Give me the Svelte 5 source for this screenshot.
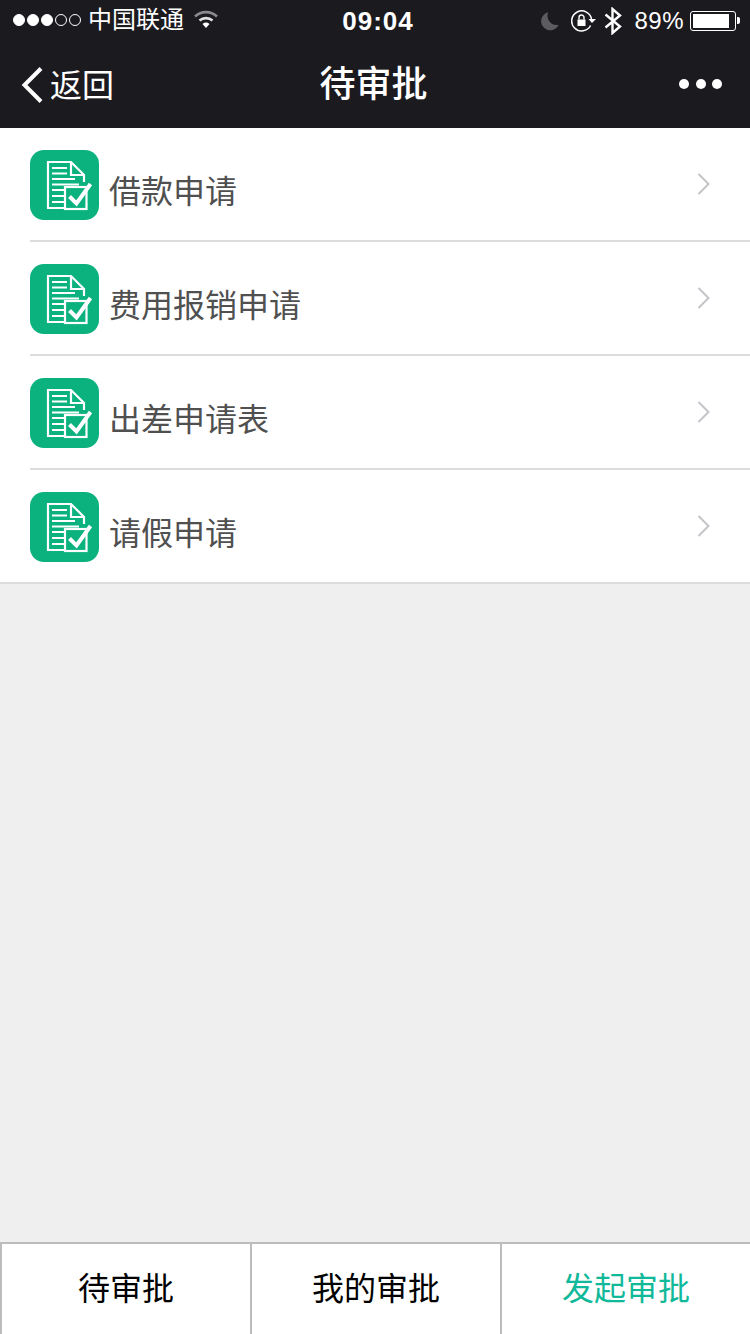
<script>
	const items = ["借款申请", "费用报销申请", "出差申请表", "请假申请"];
	const tabs = ["待审批", "我的审批", "发起审批"];
</script>

<div class="page">
	<header class="top">
		<div class="status">
			<div class="status-left">
				<span class="signal">
					<i class="on"></i><i class="on"></i><i class="on"></i><i></i><i></i>
				</span>
				<span class="carrier">中国联通</span>
				<svg class="wifi" width="26" height="20" viewBox="0 0 26 20">
					<path d="M2 6.5 A16 16 0 0 1 24 6.5" fill="none" stroke="#8a8a8c" stroke-width="2.6" />
					<path d="M6.5 10.5 A10 10 0 0 1 19.5 10.5" fill="none" stroke="#e0e0e0" stroke-width="2.6" />
					<path d="M9.5 14 A5.5 5.5 0 0 1 16.5 14 L13 18 Z" fill="#fff" />
				</svg>
			</div>
			<div class="clock">09:04</div>
			<div class="status-right">
				<svg class="moon" width="20" height="22" viewBox="0 0 22 22">
					<path d="M9 1.5 A10 10 0 1 0 20.5 15 A10 10 0 0 1 9 1.5 Z" fill="#5c5c60" />
				</svg>
				<svg class="lock" width="26" height="24" viewBox="0 0 26 22">
					<path d="M19.6 15.5 A10 10 0 1 1 20.6 9.5" fill="none" stroke="#fff" stroke-width="1.5" />
					<path d="M17.5 9 L25 9 L21 13 Z" fill="#fff" />
					<rect x="6.5" y="9.5" width="8" height="6.5" fill="#fff" />
					<path d="M8 9.5 V7.5 A2.5 2.5 0 0 1 13 7.5 V9.5" fill="none" stroke="#fff" stroke-width="1.4" />
				</svg>
				<svg class="bt" width="18" height="28" viewBox="0 0 18 28">
					<path d="M1.5 7.5 L16 19.5 L8.5 26 V2 L16 8.5 L1.5 20.5" fill="none" stroke="#fff" stroke-width="2.4" />
				</svg>
				<span class="pct">89%</span>
				<span class="battery"><span class="fill" style="width: 89%"></span></span>
				<span class="nub"></span>
			</div>
		</div>
		<nav class="nav">
			<div class="back">
				<svg width="24" height="38" viewBox="0 0 24 38">
					<path d="M21 2.5 L4.5 19 L21 35.5" fill="none" stroke="#fff" stroke-width="4" />
				</svg>
				<span>返回</span>
			</div>
			<div class="title">待审批</div>
			<div class="more"><i></i><i></i><i></i></div>
		</nav>
	</header>

	<main class="list">
		{#each items as item, i}
			<div class="row" class:last={i === items.length - 1}>
				<div class="row-inner">
					<div class="icon">
						<svg width="69" height="70" viewBox="0 0 69 70">
							<path d="M34 58 H18 V12 H41 L54 25 V32" fill="none" stroke="#fff" stroke-width="2.2" />
							<path d="M41 12 V25 H54" fill="none" stroke="#fff" stroke-width="2.2" />
							<path d="M22 18 H37 M22 23.5 H37 M22 29 H45 M22 34.5 H49 M22 40 H34 M22 46 H34 M22 52 H34" fill="none" stroke="#fff" stroke-width="2" />
							<rect x="35" y="37" width="21.5" height="22" fill="#0bb27e" stroke="#fff" stroke-width="2.2" />
							<path d="M39.5 46.5 L46.5 53.5 L60.5 34" fill="none" stroke="#fff" stroke-width="4" />
						</svg>
					</div>
					<span class="label">{item}</span>
					<svg class="chevron" width="14" height="24" viewBox="0 0 14 24">
						<path d="M1.5 2 L11.5 12 L1.5 22" fill="none" stroke="#c4c4c8" stroke-width="2" />
					</svg>
				</div>
			</div>
		{/each}
	</main>

	<footer class="tabs">
		{#each tabs as tab, i}
			<div class="tab" class:active={i === 2}>{tab}</div>
		{/each}
	</footer>
</div>

<style>
	:global(body) {
		margin: 0;
		background: #efeff0;
	}

	.page {
		width: 750px;
		height: 1334px;
		display: flex;
		flex-direction: column;
		overflow: hidden;
		background: #efeff0;
		font-family: "Liberation Sans", "Noto Sans CJK SC", sans-serif;
	}

	.top {
		background: #1b1a1f;
		color: #fff;
	}

	.status {
		height: 40px;
		display: flex;
		align-items: center;
		justify-content: space-between;
		padding: 0 11px 0 13px;
		position: relative;
	}

	.status-left,
	.status-right {
		display: flex;
		align-items: center;
	}

	.status-right {
		margin-right: -1px;
		padding-top: 1px;
	}

	.signal {
		display: flex;
		gap: 2px;
		margin-right: 7px;
	}

	.signal i {
		width: 10px;
		height: 10px;
		border: 1px solid #fff;
		border-radius: 50%;
	}

	.signal i.on {
		background: #fff;
	}

	.carrier {
		font-size: 24px;
		line-height: 42px;
	}

	.wifi {
		margin-left: 9px;
	}

	.clock {
		position: absolute;
		left: 6px;
		right: 0;
		top: 1px;
		text-align: center;
		font-size: 26px;
		font-weight: 700;
		letter-spacing: 1px;
		line-height: 40px;
		font-family: "Liberation Sans", sans-serif;
	}

	.moon {
		margin-right: 11px;
	}

	.lock {
		margin-right: 7px;
	}

	.bt {
		margin-right: 12px;
	}

	.pct {
		font-size: 24px;
		margin-right: 6px;
		letter-spacing: 0.5px;
	}

	.battery {
		height: 20px;
		border: 1px solid #fff;
		border-radius: 3px;
		padding: 2px;
		box-sizing: border-box;
		display: block;
		width: 46px;
	}

	.fill {
		display: block;
		height: 100%;
		background: #fff;
	}

	.nub {
		width: 3px;
		height: 7px;
		background: #fff;
		margin-left: 1px;
		border-radius: 0 2px 2px 0;
	}

	.nav {
		height: 88px;
		display: flex;
		align-items: center;
		justify-content: space-between;
		padding: 0 28px 0 20px;
		position: relative;
	}

	.back {
		display: flex;
		align-items: center;
		gap: 6px;
		font-size: 32px;
		line-height: 86px;
	}

	.back svg {
		margin-top: 2px;
	}

	.back span {
		padding-top: 4px;
	}

	.title {
		position: absolute;
		left: 0;
		right: 3px;
		top: 0;
		line-height: 90px;
		text-align: center;
		font-size: 36px;
		font-weight: 500;
	}

	.more {
		display: flex;
		gap: 6.5px;
	}

	.more i {
		width: 10px;
		height: 10px;
		border-radius: 50%;
		background: #fff;
	}

	.list {
		flex: 1;
	}

	.row {
		background: #fff;
		padding-left: 30px;
	}

	.row.last {
		padding-left: 0;
		border-bottom: 2px solid #dcdcdc;
	}

	.row.last .row-inner {
		padding-left: 30px;
		border-bottom: 0;
	}

	.row-inner {
		height: 112px;
		display: flex;
		align-items: center;
		border-bottom: 2px solid #dcdcdc;
		padding-right: 39px;
	}

	.icon {
		width: 69px;
		height: 70px;
		margin-top: 1px;
		border-radius: 14px;
		background: #0bb27e;
		flex: none;
	}

	.icon svg {
		display: block;
	}

	.label {
		flex: 1;
		margin-left: 10px;
		margin-top: 9px;
		font-size: 32px;
		color: #505050;
	}

	.tabs {
		height: 92px;
		box-sizing: border-box;
		display: flex;
		background: #fff;
		border-top: 2px solid #bcbcbc;
	}

	.tab {
		flex: 1;
		border-left: 2px solid #bcbcbc;
		text-align: center;
		font-size: 32px;
		line-height: 90px;
		color: #000;
	}

	.tab.active {
		color: #10b999;
	}
</style>
